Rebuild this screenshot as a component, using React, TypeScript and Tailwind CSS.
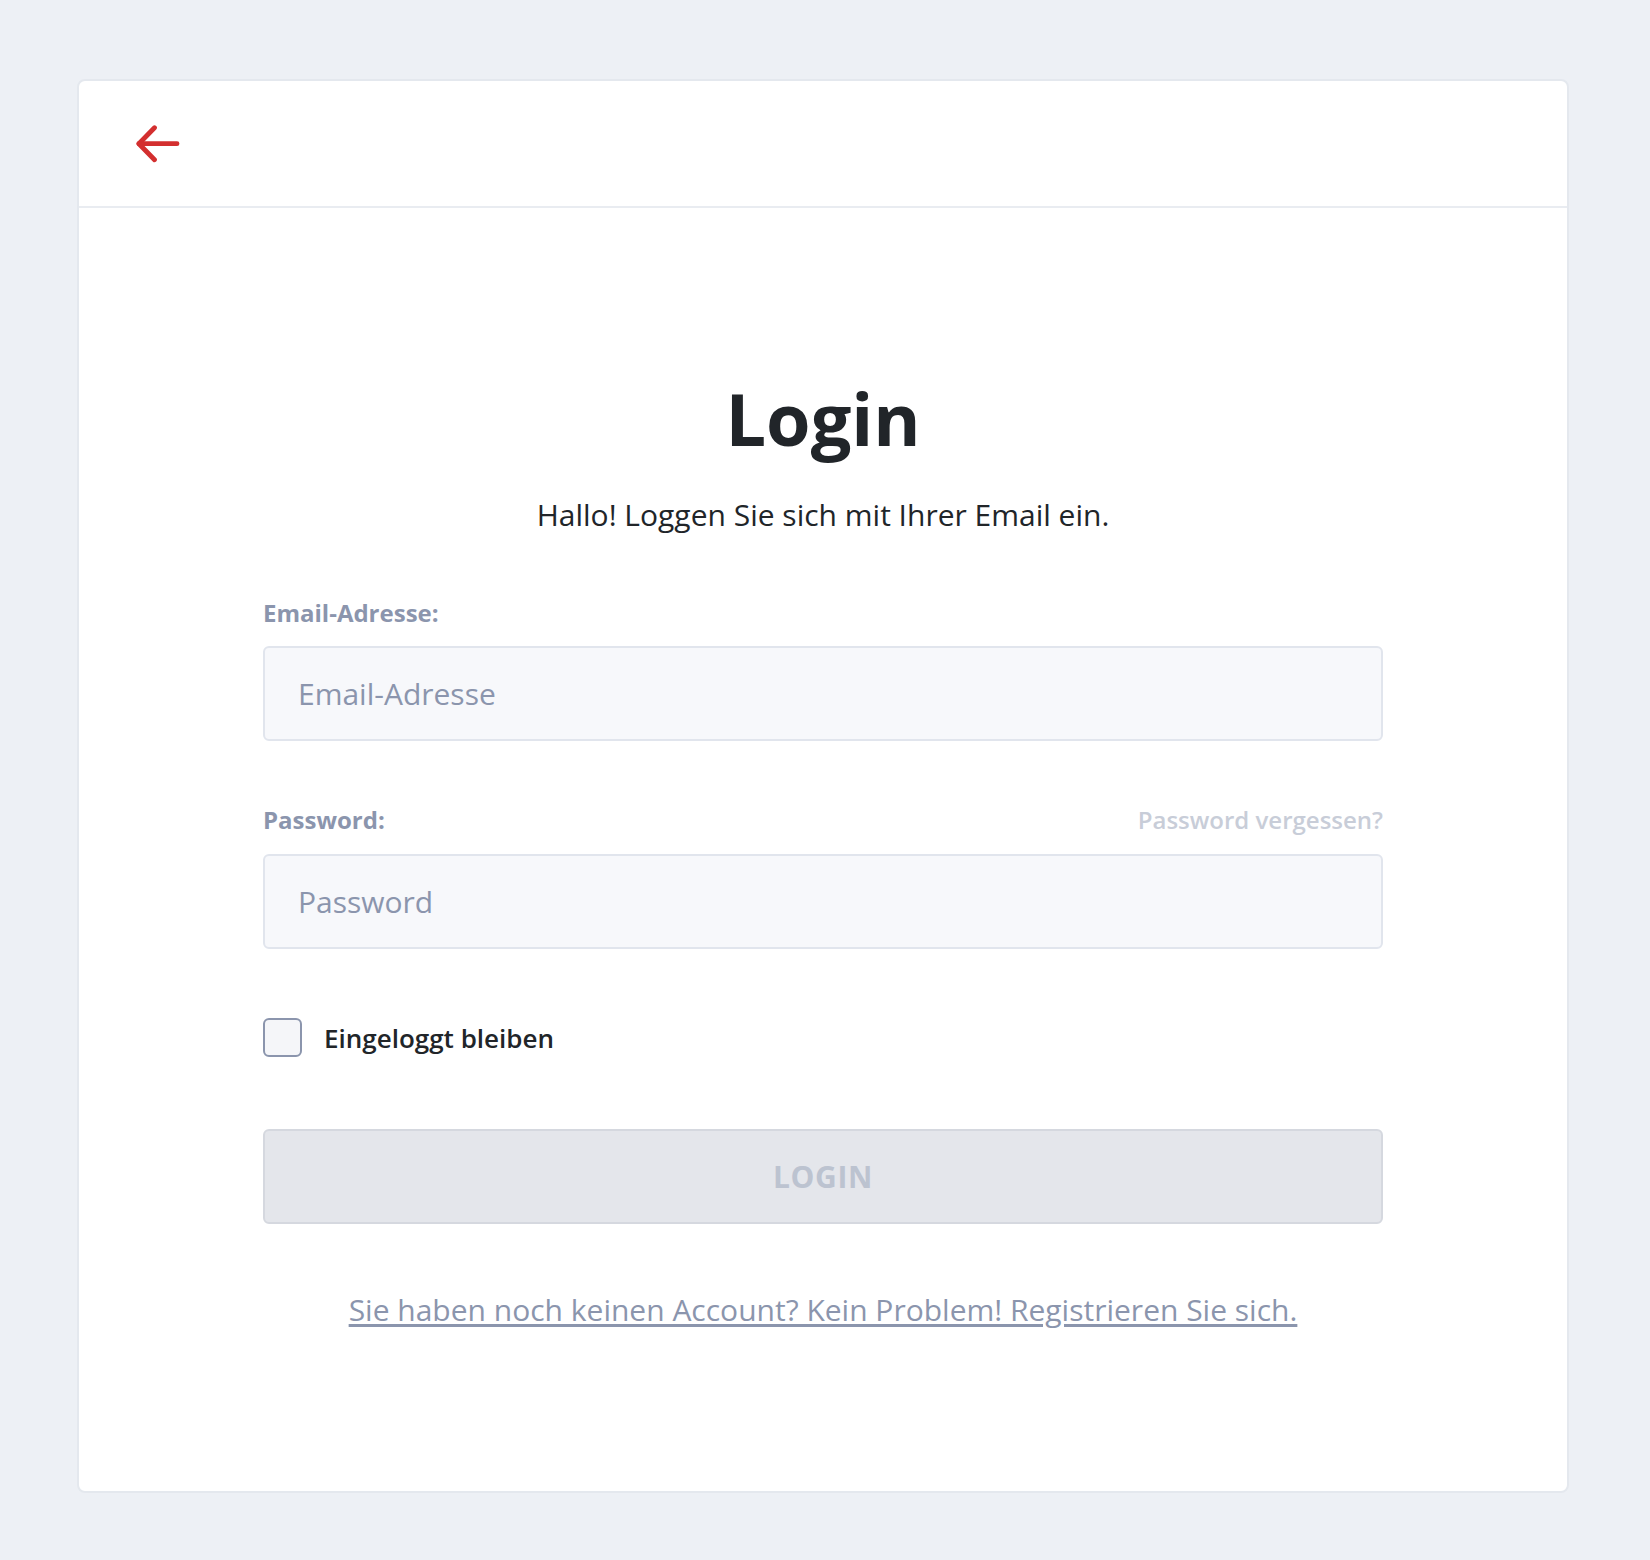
import React from "react";

export default function App() {
  return (
    <div className="min-h-[1560px] bg-[#edf0f5] pt-[79px] pl-[77px] font-['Open_Sans',sans-serif]">
      <div className="w-[1492px] bg-white border-2 border-[#e4e8ee] rounded-[8px]">
        <div className="h-[127px] flex items-center pl-[57px] border-b-2 border-[#e9ecf1]">
          <svg width="44" height="40" viewBox="0 0 44 40" fill="none" stroke="#d32f2f" strokeWidth="4.8" strokeLinecap="round" strokeLinejoin="round">
            <path d="M18.5 3.7 L2.9 19.7 L18.5 35.7" />
            <path d="M2.9 19.7 H41" />
          </svg>
        </div>
        <div className="pt-[174px] pb-[164px] flex flex-col items-center">
          <h1 className="text-[72px] leading-none font-bold text-[#212529]">Login</h1>
          <p className="mt-[46px] text-[30px] leading-none text-[#212529]">Hallo! Loggen Sie sich mit Ihrer Email ein.</p>
          <div className="mt-[71px] w-[1120px] flex flex-col">
            <label className="text-[24px] leading-none font-bold text-[#8b95ad]">Email-Adresse:</label>
            <div className="mt-[21px] h-[95px] border-2 border-[#e1e5ed] rounded-[6px] bg-[#f7f8fb] flex items-center pl-[33px]">
              <span className="text-[30px] leading-none text-[#8b95ad]">Email-Adresse</span>
            </div>
            <div className="mt-[67px] flex justify-between items-end">
              <label className="text-[24px] leading-none font-bold text-[#8b95ad]">Password:</label>
              <span className="text-[24px] leading-none font-semibold text-[#c8cdd8]">Password vergessen?</span>
            </div>
            <div className="mt-[22px] h-[95px] border-2 border-[#e1e5ed] rounded-[6px] bg-[#f7f8fb] flex items-center pl-[33px]">
              <span className="text-[30px] leading-none text-[#8b95ad]">Password</span>
            </div>
            <div className="mt-[69px] flex items-center gap-[22px]">
              <div className="w-[39px] h-[39px] border-2 border-[#8b95ad] rounded-[6px] bg-[#f5f6f9]" />
              <span className="text-[26px] leading-none font-semibold text-[#212529]">Eingeloggt bleiben</span>
            </div>
            <div className="mt-[72px] h-[95px] border-2 border-[#d5d8df] rounded-[6px] bg-[#e4e6eb] flex items-center justify-center">
              <span className="text-[30px] leading-none font-bold text-[#bcc3d0] tracking-[0.02em]">LOGIN</span>
            </div>
            <div className="mt-[71px] text-center">
              <a className="text-[30px] leading-none text-[#8b95ad] underline underline-offset-[3px]">Sie haben noch keinen Account? Kein Problem! Registrieren Sie sich.</a>
            </div>
          </div>
        </div>
      </div>
    </div>
  );
}
